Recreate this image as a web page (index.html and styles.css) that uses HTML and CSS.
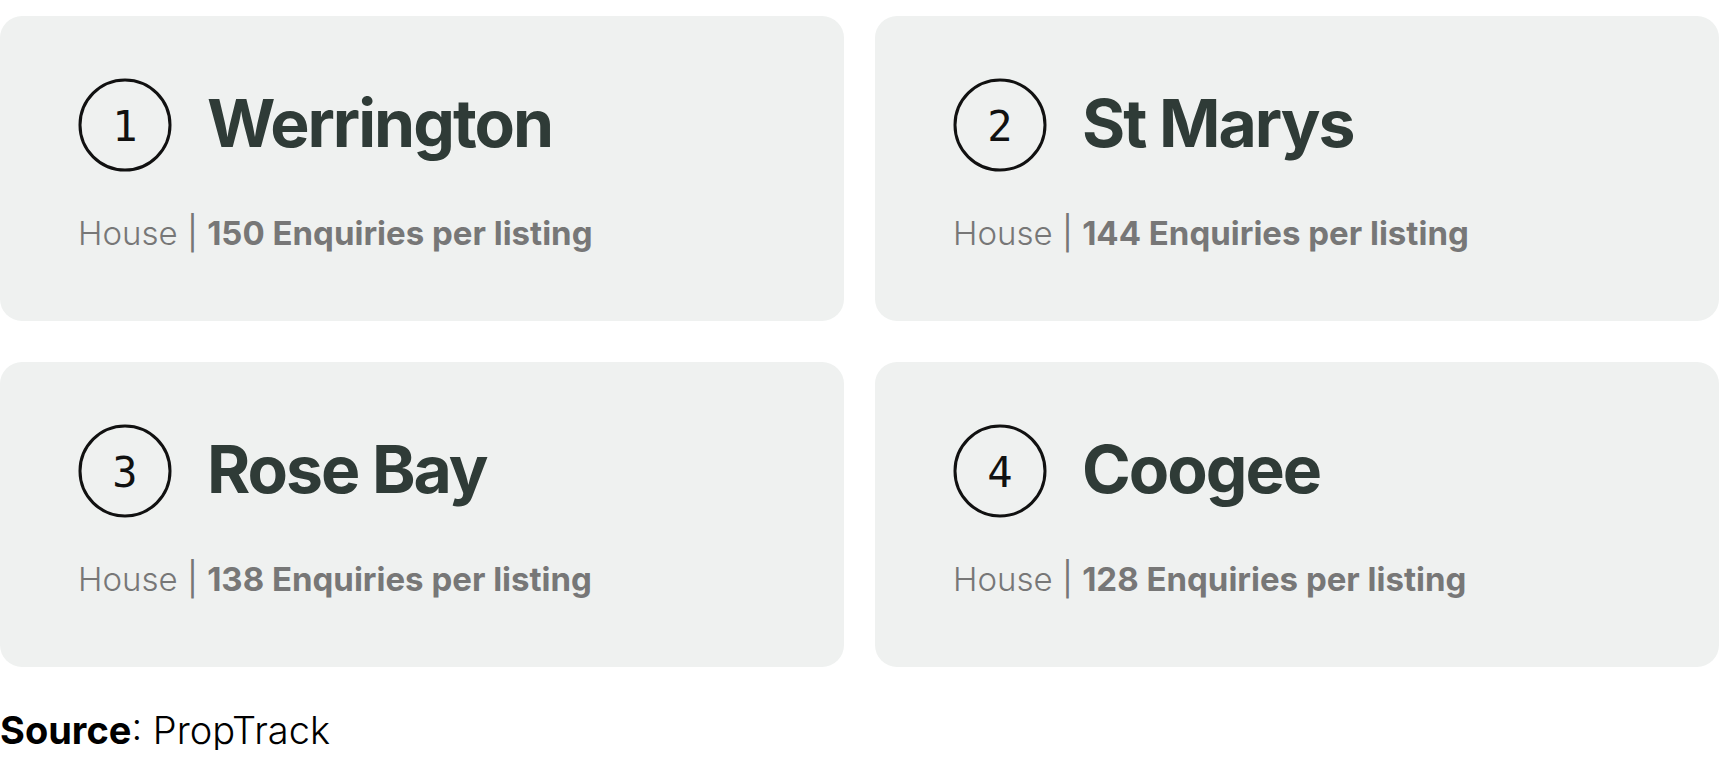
FILE: index.html
```html
<!DOCTYPE html>
<html lang="en">
<head>
<meta charset="utf-8">
<title>Top suburbs by enquiries</title>
<link rel="stylesheet" href="styles.css">
</head>
<body>
<div class="page">
  <div class="grid">
    <div class="card">
      <div class="head">
        <svg class="num" viewBox="0 0 94 94" width="94" height="94"><circle cx="47" cy="47" r="45" fill="none" stroke="#111" stroke-width="3"/><text x="47" y="48" text-anchor="middle" dominant-baseline="central">1</text></svg>
        <h2 class="title">Werrington</h2>
      </div>
      <p class="meta"><span class="type">House</span> | <b>150 Enquiries per listing</b></p>
    </div>
    <div class="card">
      <div class="head">
        <svg class="num" viewBox="0 0 94 94" width="94" height="94"><circle cx="47" cy="47" r="45" fill="none" stroke="#111" stroke-width="3"/><text x="47" y="48" text-anchor="middle" dominant-baseline="central">2</text></svg>
        <h2 class="title">St Marys</h2>
      </div>
      <p class="meta"><span class="type">House</span> | <b>144 Enquiries per listing</b></p>
    </div>
    <div class="card">
      <div class="head">
        <svg class="num" viewBox="0 0 94 94" width="94" height="94"><circle cx="47" cy="47" r="45" fill="none" stroke="#111" stroke-width="3"/><text x="47" y="48" text-anchor="middle" dominant-baseline="central">3</text></svg>
        <h2 class="title">Rose Bay</h2>
      </div>
      <p class="meta"><span class="type">House</span> | <b>138 Enquiries per listing</b></p>
    </div>
    <div class="card">
      <div class="head">
        <svg class="num" viewBox="0 0 94 94" width="94" height="94"><circle cx="47" cy="47" r="45" fill="none" stroke="#111" stroke-width="3"/><text x="47" y="48" text-anchor="middle" dominant-baseline="central">4</text></svg>
        <h2 class="title">Coogee</h2>
      </div>
      <p class="meta"><span class="type">House</span> | <b>128 Enquiries per listing</b></p>
    </div>
  </div>
  <p class="source"><b>Source</b>: PropTrack</p>
</div>
</body>
</html>
```
FILE: styles.css
```css
html, body {
  margin: 0;
  padding: 0;
  background: #ffffff;
}
body {
  font-family: Inter, "Open Sans", "Liberation Sans", sans-serif;
}
.page {
  padding-top: 16px;
}
.grid {
  display: grid;
  grid-template-columns: 844px 844px;
  column-gap: 31px;
  row-gap: 41px;
}
.card {
  background: #eff1f0;
  border-radius: 22px;
  height: 305px;
  box-sizing: border-box;
  padding: 62px 40px 0 78px;
}
.head {
  display: flex;
  align-items: center;
  gap: 35px;
  height: 94px;
}
.num {
  flex: none;
  display: block;
}
.num text {
  font-family: "DejaVu Sans Mono", "Liberation Mono", monospace;
  font-size: 42px;
  fill: #111;
}
.title {
  margin: 0;
  font-size: 66px;
  font-weight: 700;
  letter-spacing: -2px;
  color: #2f3b37;
  line-height: 1;
  padding-bottom: 4px;
}
.meta {
  margin: 41px 0 0 0;
  font-size: 33px;
  line-height: 40px;
  color: #777777;
  letter-spacing: 0;
}
.meta .type {
  font-weight: 300;
}
.meta b {
  font-weight: 700;
}
.source {
  margin: 43px 0 0 0;
  font-size: 38px;
  line-height: 40px;
  color: #000;
  font-weight: 300;
  letter-spacing: 0;
}
.source b {
  font-weight: 700;
}
```
